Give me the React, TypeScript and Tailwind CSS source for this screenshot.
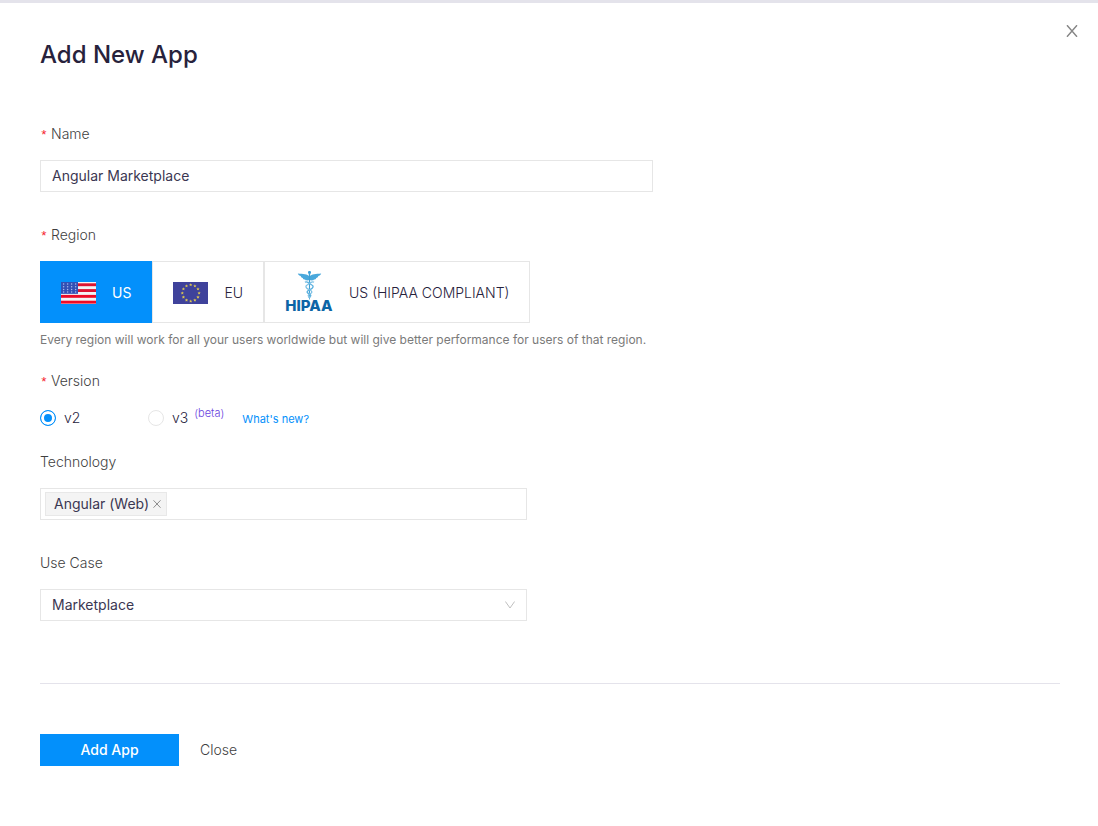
import { useState } from "react";
import type { ReactNode } from "react";

function UsFlag() {
  const stars: ReactNode[] = [];
  for (let row = 0; row < 4; row++) {
    for (let col = 0; col < 4; col++) {
      stars.push(<circle key={`${row}-${col}`} cx={2.6 + col * 4} cy={2 + row * 2.7} r="0.75" fill="#a9b8ea" />);
    }
  }
  return (
    <svg width="35" height="22" viewBox="0 0 35 22" aria-hidden="true">
      <rect width="35" height="22" fill="#f3f3f5" />
      {[0, 1, 2, 3].map((i) => (
        <rect key={i} y={1.3 + i * 5.8} width="35" height="2.9" fill={i < 2 ? "#dc1432" : "#ee0a26"} />
      ))}
      <rect width="17" height="11.85" fill="#3350b5" />
      {stars}
    </svg>
  );
}

function EuFlag() {
  return (
    <svg width="35" height="22" viewBox="0 0 35 22" aria-hidden="true">
      <rect width="35" height="22" fill="#3f429b" />
      {Array.from({ length: 12 }, (_, i) => {
        const a = (i * Math.PI) / 6;
        return (
          <polygon
            key={i}
            points="0,-1.6 0.5,-0.5 1.6,-0.5 0.8,0.3 1,1.4 0,0.8 -1,1.4 -0.8,0.3 -1.6,-0.5 -0.5,-0.5"
            transform={`translate(${17.7 + 8.4 * Math.sin(a)} ${11 - 8.2 * Math.cos(a)})`}
            fill="#dcc650"
          />
        );
      })}
    </svg>
  );
}

function HipaaLogo() {
  return (
    <svg width="48" height="44" viewBox="0 0 48 44" aria-hidden="true">
      <circle cx="24.5" cy="1.4" r="1.5" fill="#3a9fd8" />
      <path
        d="M24.5 5.6C22.500 3 18 3.200 12.800 2.600c.5 1.500 1.800 2.200 3 2.400-.2 1 .9 1.700 2 1.900 0 1 1.300 1.600 2.200 1.600.3 1 2.800 1.300 4.500.2 1.700 1.100 4.200.8 4.500-.2.9 0 2.200-.6 2.200-1.600 1.100-.2 2.200-.9 2-1.900 1.200-.2 2.500-.9 3-2.400C31 3.200 26.500 3 24.500 5.600z"
        fill="#49a8dc"
      />
      <path d="M23.8 3h1.400l-.3 25.500h-.8z" fill="#3f9fd3" />
      <path
        d="M20 11.300c1.500-1.200 3 .2 4.500 1.200 2.700 1.700 5 2.700 2.700 4.700-1.700 1.500-5.500 2-5 4.100.4 1.500 3.900 1.600 3.600 3.300-.2 1.200-1.900 1.200-1.800 2.300"
        fill="none"
        stroke="#5cb1df"
        strokeWidth="1.4"
      />
      <path
        d="M29 11.300c-1.500-1.200-3 .2-4.500 1.200-2.700 1.700-5 2.700-2.700 4.700 1.700 1.500 5.500 2 5 4.100-.4 1.500-3.900 1.600-3.600 3.300.2 1.200 1.900 1.200 1.800 2.300"
        fill="none"
        stroke="#7cc0e4"
        strokeWidth="1.3"
      />
      <text
        x="24"
        y="40"
        textAnchor="middle"
        fill="#0d65a6"
        className="font-['Inter',sans-serif] text-[15px] font-extrabold"
      >
        HIPAA
      </text>
    </svg>
  );
}

function Required() {
  return <span className="mr-1 inline-block w-[7px] font-['Liberation_Mono',monospace] text-[13px] leading-none text-[#f5222d]">*</span>;
}

const labelClass = "block text-[14px] font-light leading-[22px] text-[#3f3f3f]";

const regions = [
  { id: "us", label: "US", icon: <UsFlag /> },
  { id: "eu", label: "EU", icon: <EuFlag /> },
  { id: "hipaa", label: "US (HIPAA COMPLIANT)", icon: <HipaaLogo /> },
];

const radioClass =
  "h-4 w-4 shrink-0 appearance-none rounded-full border border-[#e6e6e6] bg-white checked:border-[#0390fb] checked:bg-[#0390fb] checked:shadow-[inset_0_0_0_3px_white]";

export default function App() {
  const [name, setName] = useState("Angular Marketplace");
  const [region, setRegion] = useState("us");
  const [version, setVersion] = useState("v2");
  const [tags, setTags] = useState(["Angular (Web)"]);

  return (
    <div className="min-h-screen border-t-[3px] border-[#e4e3eb] bg-white font-['Inter',sans-serif] text-[14px] leading-[22px] text-[#3b3752]">
      <header className="flex items-start justify-between pl-10 pr-5">
        <h1 className="pt-9 text-[24px] font-medium leading-8 text-[#27223c]">Add New App</h1>
        <button type="button" aria-label="Close dialog" className="mt-5 flex h-4 w-3 items-center justify-center text-[#868686]">
          <svg width="12" height="12" viewBox="0 0 12 12" fill="none" stroke="currentColor" strokeWidth="1.4" aria-hidden="true">
            <path d="M1 .2l10 11.600M11 .2L1 11.800" />
          </svg>
        </button>
      </header>

      <form className="pb-15 pl-10 pr-[38px] pt-13" onSubmit={(e) => e.preventDefault()}>
        <label htmlFor="name" className={labelClass}>
          <Required />
          Name
        </label>
        <input
          id="name"
          value={name}
          onChange={(e) => setName(e.target.value)}
          className="mt-[15px] block h-8 w-full max-w-[613px] border border-[#e6e6e6] px-[11px] pb-px outline-none"
        />

        <fieldset className="mt-8">
          <legend className={labelClass}>
            <Required />
            Region
          </legend>
          <div className="mt-[15px] flex">
            {regions.map((r) => (
              <label
                key={r.id}
                className="flex h-[62px] items-center gap-4 border border-[#e6e6e6] px-5 pt-px font-light text-[#27223c] has-checked:border-[#0390fb] has-checked:bg-[#0390fb] has-checked:font-normal has-checked:text-white"
              >
                <input
                  type="radio"
                  name="region"
                  className="sr-only"
                  checked={region === r.id}
                  onChange={() => setRegion(r.id)}
                />
                {r.icon}
                <span>{r.label}</span>
              </label>
            ))}
          </div>
          <p className="mt-[6px] text-[12px] text-[#7a7a7a]">
            Every region will work for all your users worldwide but will give better performance for users of that region.
          </p>
        </fieldset>

        <fieldset className="mt-[19px]">
          <legend className={labelClass}>
            <Required />
            Version
          </legend>
          <div className="mt-[15px] flex h-[22px] items-center font-light text-[#27223c]">
            <label className="flex w-27 items-center gap-2">
              <input type="radio" name="version" className={radioClass} checked={version === "v2"} onChange={() => setVersion("v2")} />
              v2
            </label>
            <label className="flex items-center gap-2">
              <input type="radio" name="version" className={radioClass} checked={version === "v3"} onChange={() => setVersion("v3")} />
              <span className="flex gap-[6px]">
                v3
                <span className="text-[11px] leading-3 text-[#6a45e0]">(beta)</span>
              </span>
            </label>
            <a href="#whats-new" className="ml-[18px] pt-[2px] text-[11px] font-normal text-[#0390fb]">
              What's new?
            </a>
          </div>
        </fieldset>

        <label htmlFor="technology" className={`mt-[22px] ${labelClass}`}>
          Technology
        </label>
        <div className="mt-[15px] flex h-8 w-full max-w-[487px] items-center gap-1 border border-[#e6e6e6] px-1">
          {tags.map((tag) => (
            <span key={tag} className="flex h-6 shrink-0 items-center gap-1 border border-[#e8e8e8] bg-[#f4f4f4] pl-2 pr-[5px]">
              {tag}
              <button
                type="button"
                aria-label={`Remove ${tag}`}
                className="text-[#8c8c8c]"
                onClick={() => setTags(tags.filter((t) => t !== tag))}
              >
                <svg width="8" height="8" viewBox="0 0 8 8" fill="none" stroke="currentColor" aria-hidden="true">
                  <path d="M.5 .3l7 7.400M7.500 .3l-7 7.400" />
                </svg>
              </button>
            </span>
          ))}
          <input id="technology" className="min-w-0 flex-1 outline-none" />
        </div>

        <label htmlFor="use-case" className={`mt-8 ${labelClass}`}>
          Use Case
        </label>
        <div className="mt-[15px] grid h-8 w-full max-w-[487px] items-center border border-[#e6e6e6]">
          <select id="use-case" className="col-start-1 row-start-1 h-full w-full appearance-none bg-transparent px-[11px] outline-none">
            <option>Marketplace</option>
            <option>Social</option>
            <option>Support</option>
          </select>
          <svg
            className="pointer-events-none col-start-1 row-start-1 mr-[11px] justify-self-end text-[#bfbfbf]"
            width="10"
            height="8"
            viewBox="0 0 10 8"
            fill="none"
            stroke="currentColor"
            aria-hidden="true"
          >
            <path d="M.4 .5L5 7L9.600 .5" />
          </svg>
        </div>

        <div className="mt-[62px] flex gap-[21px] border-t border-[#e4e3eb] pt-[50px]">
          <button type="submit" className="h-8 w-[139px] bg-[#0390fb] font-medium text-white">
            Add App
          </button>
          <button type="button" className="h-8 font-light text-[#3f3f3f]">
            Close
          </button>
        </div>
      </form>
    </div>
  );
}
